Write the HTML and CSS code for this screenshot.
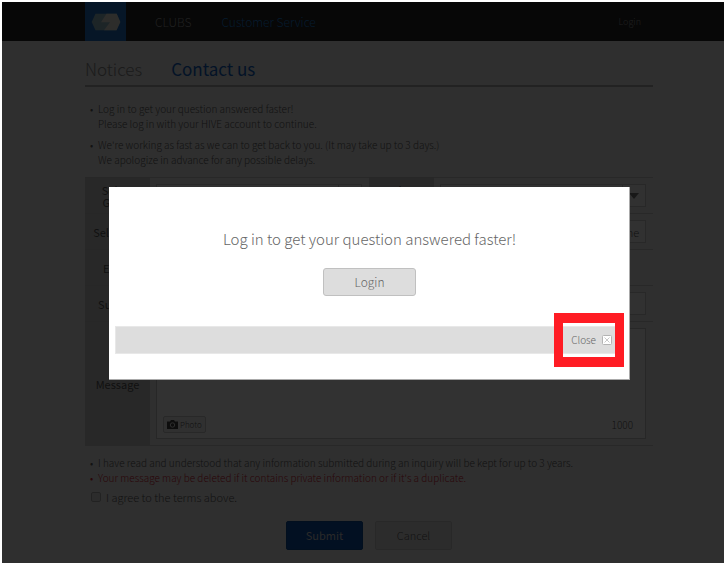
FILE: index.html
```html
<!DOCTYPE html>
<html lang="en">
<head>
    <meta charset="UTF-8">
    <meta name="viewport" content="width=device-width, initial-scale=1.0">
    <title>Customer Service</title>
    <link rel="stylesheet" href="styles.css">
</head>
<body>
    <div class="page">
        <header class="header">
            <a class="logo" href="#" aria-label="Home">
                <svg width="30" height="18" viewBox="0 0 30 18">
                    <path d="M4.5 0.7H25.7L29.3 9L25.5 17.2H4.5L0.7 9Z" fill="#90b8c4"/>
                    <path d="M15.5 0.7H25.7L29.3 9L25.5 17.2H13L19 9.2H10Z" fill="#e0e0d8"/>
                </svg>
            </a>
            <nav class="nav">
                <a href="#">CLUBS</a>
                <a class="active" href="#">Customer Service</a>
            </nav>
            <a class="header-login" href="#">Login</a>
        </header>

        <main class="content">
            <nav class="tabs">
                <a href="#">Notices</a>
                <a class="active" href="#">Contact us</a>
            </nav>

            <ul class="notes">
                <li>Log in to get your question answered faster!<br>Please log in with your HIVE account to continue.</li>
                <li>We're working as fast as we can to get back to you. (It may take up to 3 days.)<br>We apologize in advance for any possible delays.</li>
            </ul>

            <form>
                <table class="form-table">
                    <tr>
                        <th><label for="game">Select<br>Game</label></th>
                        <td>
                            <div class="select-box">
                                <select id="game"></select>
                                <span class="arrow"></span>
                            </div>
                        </td>
                        <th><label for="server">Select<br>Server</label></th>
                        <td>
                            <div class="select-box">
                                <select id="server"></select>
                                <span class="arrow"></span>
                            </div>
                        </td>
                    </tr>
                    <tr>
                        <th><label for="device">Select OS</label></th>
                        <td colspan="3">
                            <div class="field-row">
                                <input type="text" id="device">
                                <button type="button" class="btn-small">Phone</button>
                            </div>
                        </td>
                    </tr>
                    <tr>
                        <th><label for="email">Email</label></th>
                        <td colspan="3"><input type="text" id="email" class="short"></td>
                    </tr>
                    <tr>
                        <th><label for="subject">Subject</label></th>
                        <td colspan="3"><input type="text" id="subject"></td>
                    </tr>
                    <tr>
                        <th><label for="message">Message</label></th>
                        <td colspan="3">
                            <div class="message-box">
                                <textarea id="message"></textarea>
                                <div class="message-tools">
                                    <button type="button" class="btn-photo">
                                        <svg width="11" height="9" viewBox="0 0 11 9">
                                            <path d="M0 1.5H3L4 0H7L8 1.5H11V9H0Z" fill="#444"/>
                                            <circle cx="5.5" cy="5" r="2.2" fill="none" stroke="#e0e0e0"/>
                                        </svg>
                                        Photo
                                    </button>
                                    <span class="count">1000</span>
                                </div>
                            </div>
                        </td>
                    </tr>
                </table>

                <ul class="notes terms">
                    <li>I have read and understood that any information submitted during an inquiry will be kept for up to 3 years.</li>
                    <li class="warning">Your message may be deleted if it contains private information or if it's a duplicate.</li>
                </ul>
                <div class="agree">
                    <input type="checkbox" id="agree">
                    <label for="agree">I agree to the terms above.</label>
                </div>
                <div class="form-buttons">
                    <button type="submit" class="submit">Submit</button>
                    <button type="button" class="cancel">Cancel</button>
                </div>
            </form>
        </main>

        <div class="overlay">
            <div class="modal" role="dialog">
                <p>Log in to get your question answered faster!</p>
                <button type="button" class="modal-login">Login</button>
                <div class="modal-bar">
                    <button type="button" class="close">
                        Close
                        <svg width="10" height="10" viewBox="0 0 10 10">
                            <rect x="0.5" y="0.5" width="9" height="9" rx="1" fill="#fff" stroke="#b4b4b4"/>
                            <path d="M2.5 2.5L7.5 7.5M7.5 2.5L2.5 7.5" stroke="#c8c8c8"/>
                        </svg>
                    </button>
                    <span class="highlight"></span>
                </div>
            </div>
        </div>
    </div>
</body>
</html>
```

FILE: styles.css
```css
* {
    box-sizing: border-box;
}
body {
    margin: 0;
    padding: 2px 2px 0;
    background-color: #fff;
    font-family: "Noto Sans CJK KR", "Noto Sans", sans-serif;
    font-size: 12px;
    font-weight: 300;
    color: #5c5c5c;
}
a {
    color: inherit;
    text-decoration: none;
}
button, input, select, textarea {
    font: inherit;
    color: inherit;
    margin: 0;
    padding: 0;
    border: 1px solid #c8c8c8;
    border-radius: 0;
    background-color: #f4f4f4;
}
button {
    cursor: pointer;
}
.page {
    position: relative;
    min-height: calc(100vh - 2px);
    background-color: #e8e8e8;
}

/* header */
.header {
    display: flex;
    align-items: center;
    height: 39px;
    padding: 0 83px;
    background-color: #232323;
    color: #999;
}
.logo {
    display: flex;
    align-items: center;
    justify-content: center;
    width: 41px;
    height: 39px;
    background-color: #2070c0;
}
.nav {
    display: flex;
    flex: 1;
    gap: 30px;
    margin-left: 29px;
}
.nav .active {
    color: #2080d8;
}
.header-login {
    font-size: 9px;
}

/* content */
.content {
    padding: 0 71px 12px 83px;
}
.tabs {
    display: flex;
    gap: 29px;
    height: 46px;
    padding-top: 16px;
    border-bottom: 2px solid #aaa;
    font-size: 17px;
    line-height: 24px;
    color: #888;
}
.tabs .active {
    color: #1060c0;
    font-weight: 400;
}
.notes {
    margin: 14px 0 10px;
    padding: 0 0 0 13px;
    list-style: none;
    font-size: 10px;
    line-height: 15px;
}
.notes li {
    margin-bottom: 6px;
}
.notes li::before {
    content: "•";
    float: left;
    margin-left: -8px;
}
.terms {
    margin: 9px 0 4px;
}
.terms li {
    margin: 0;
}
.warning {
    color: #d02030;
}

/* form */
.form-table {
    width: 100%;
    table-layout: fixed;
    border-collapse: collapse;
    border-bottom: 1px solid #c8c8c8;
}
.form-table th {
    width: 65px;
    padding: 0;
    border-top: 1px solid #c0c0c0;
    background-color: #c8c8c8;
    font-weight: 400;
    font-size: 11px;
    line-height: 12px;
    color: #555;
}
.form-table td {
    height: 36px;
    padding: 6px 7px 6px 6px;
    border-top: 1px solid #c8c8c8;
}
.form-table input, .form-table select {
    display: block;
    width: 100%;
    height: 23px;
}
.form-table .short {
    width: 60%;
}
.select-box {
    position: relative;
}
.select-box select {
    appearance: none;
}
.arrow {
    position: absolute;
    top: 0;
    right: 0;
    width: 24px;
    height: 23px;
    border-left: 1px solid #c8c8c8;
    pointer-events: none;
}
.arrow::after {
    content: "";
    position: absolute;
    top: 9px;
    left: 6px;
    border: 5px solid transparent;
    border-top: 6px solid #777;
    border-bottom: 0;
}
.field-row {
    display: flex;
    gap: 6px;
}
.btn-small {
    flex: none;
    width: 46px;
    font-size: 11px;
    line-height: 16px;
}
.message-box {
    display: flex;
    flex-direction: column;
    height: 111px;
    border: 1px solid #c0c0c0;
    background-color: #f8f8f8;
}
.message-box textarea {
    flex: 1;
    border: 0;
    background-color: transparent;
    resize: none;
}
.message-tools {
    display: flex;
    align-items: center;
    justify-content: space-between;
    padding: 0 12px 5px 6px;
}
.btn-photo {
    display: flex;
    align-items: center;
    gap: 2px;
    height: 17px;
    padding: 0 3px;
    border-radius: 2px;
    background-color: #eee;
    font-size: 8px;
}
.count {
    font-size: 10px;
}
.agree {
    display: flex;
    align-items: center;
    gap: 5px;
    height: 16px;
    padding-left: 6px;
    font-size: 11px;
}
.agree input {
    appearance: none;
    width: 10px;
    height: 10px;
    border-color: #aaa;
    border-radius: 2px;
    background-color: #ddd;
}
.form-buttons {
    display: flex;
    justify-content: center;
    gap: 12px;
    margin-top: 16px;
}
.form-buttons button {
    width: 77px;
    height: 29px;
    padding-bottom: 1px;
    border-radius: 2px;
    font-size: 11px;
}
.form-buttons .submit {
    border-color: #0d4a94;
    background-color: #0c50a8;
    color: #ccc;
    font-weight: 400;
}
.form-buttons .cancel {
    background-color: #ddd;
}

/* login popup */
.overlay {
    position: absolute;
    inset: 0;
    padding: 185px 94px 0 107px;
    background-color: rgba(0, 0, 0, 0.8);
}
.modal {
    display: flex;
    flex-direction: column;
    align-items: center;
    height: 193px;
    padding: 41px 5px 0 6px;
    border: solid #aaa;
    border-width: 0 1px 1px 0;
    background-color: #fff;
    color: #666;
}
.modal p {
    margin: 0;
    font-size: 15px;
    line-height: 22px;
}
.modal-login {
    width: 93px;
    height: 28px;
    margin-top: 18px;
    padding-bottom: 2px;
    border-color: #c0c0c0;
    border-radius: 3px;
    background-color: #ddd;
}
.modal-bar {
    position: relative;
    display: flex;
    align-items: center;
    justify-content: flex-end;
    align-self: stretch;
    height: 28px;
    margin-top: 30px;
    padding-right: 11px;
    border: 1px solid #e8e8e8;
    background-color: #ddd;
}
.close {
    display: flex;
    align-items: center;
    gap: 6px;
    border: 0;
    background-color: transparent;
    font-size: 10px;
    line-height: 14px;
}
.highlight {
    position: absolute;
    top: -14px;
    right: -1px;
    width: 70px;
    height: 54px;
    border: 10px solid #ff1c24;
    border-width: 10px 9px;
    pointer-events: none;
}
```
